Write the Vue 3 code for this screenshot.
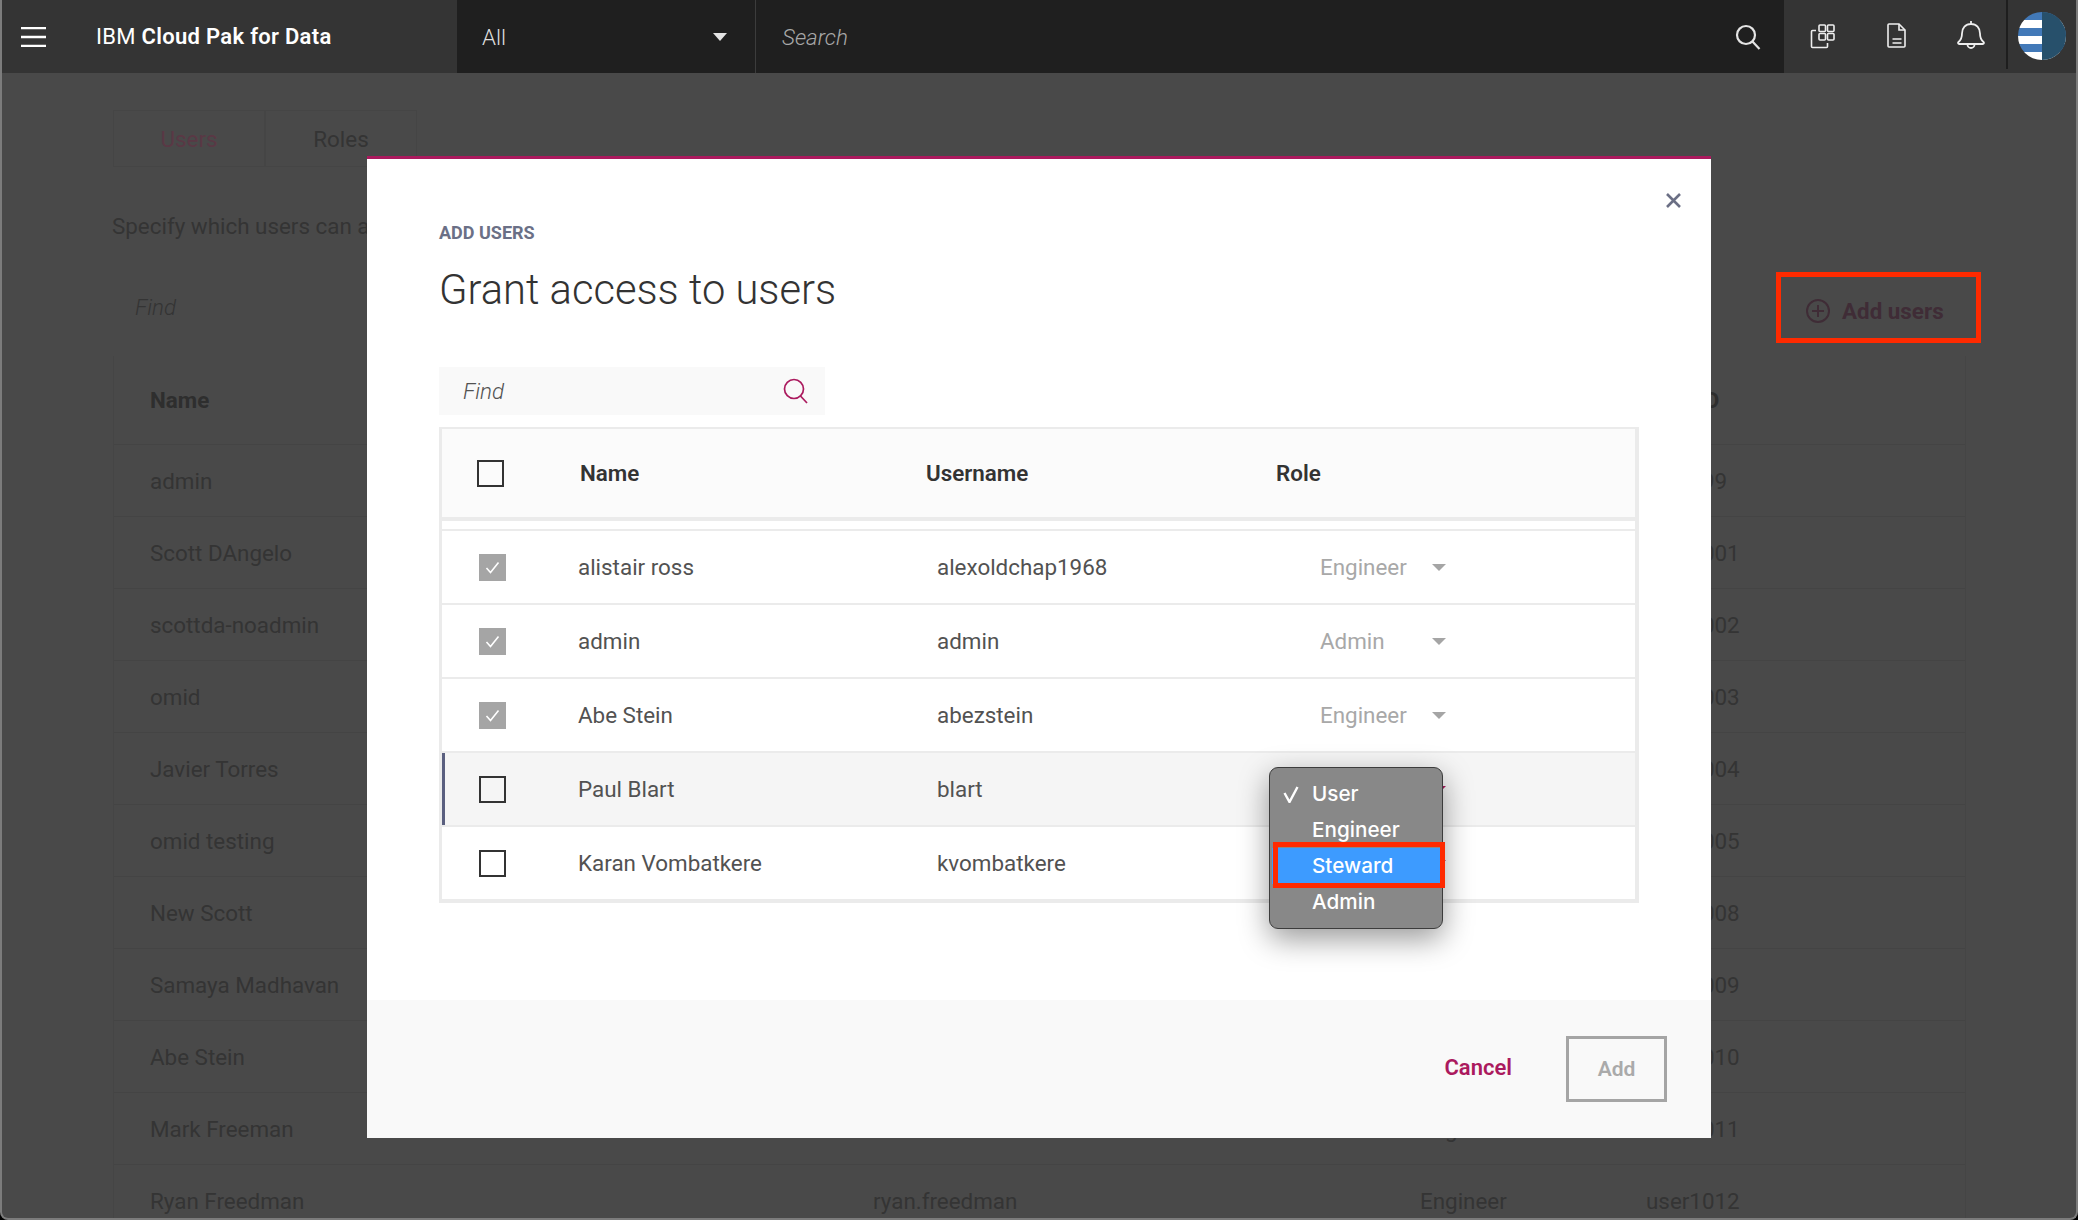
<template>
  <div class="screen">
    <header class="topbar">
      <div class="brand">
        <svg class="burger" width="26" height="20" viewBox="0 0 26 20"><path d="M0 1h25M0 10h25M0 19h25" stroke="#fff" stroke-width="2.4" fill="none" /></svg>
        <span class="product">IBM <b>Cloud Pak for Data</b></span>
      </div>
      <div class="scope">
        <span>All</span>
        <i class="caret"></i>
      </div>
      <div class="search">
        <span>Search</span>
        <svg width="26" height="26" viewBox="0 0 26 26" fill="none" stroke="#e4e4e4" stroke-width="2.2"><circle cx="11" cy="11" r="9" /><path d="M17.5 17.5l7 7.5" /></svg>
      </div>
      <div class="tools">
        <svg class="tool" width="26" height="26" viewBox="0 0 26 26" fill="none" stroke="#eee" stroke-width="1.6"><rect x="9" y="2" width="6.5" height="6.5" rx="1" /><rect x="17.500" y="2" width="6.5" height="6.5" rx="1" /><rect x="9" y="10.500" width="6.5" height="6.5" rx="1" /><rect x="17.500" y="10.500" width="6.5" height="6.5" rx="1" /><path d="M6 7.500H2.500a1 1 0 0 0-1 1v15a1 1 0 0 0 1 1h14a1 1 0 0 0 1-1V20" /></svg>
        <svg class="tool" width="20" height="26" viewBox="0 0 20 26" fill="none" stroke="#eee" stroke-width="1.6"><path d="M2 1h10l6 6v16a1 1 0 0 1-1 1H2a1 1 0 0 1-1-1V2a1 1 0 0 1 1-1z" /><path d="M12 1v6h6M5.500 16h9M5.500 20h9" /></svg>
        <svg class="tool" width="28" height="30" viewBox="0 0 28 30" fill="none" stroke="#eee" stroke-width="1.8"><path d="M14 1v3M14 4C8.500 4 5 8 5 13.500c0 4.500-1 6.500-3.500 8.500-.8.7-.5 2 .8 2h23.400c1.300 0 1.600-1.300.8-2-2.500-2-3.500-4-3.500-8.500C23 8 19.500 4 14 4z" /><path d="M10.500 24.500a3.500 3.500 0 0 0 7 0" /></svg>
        <div class="avatar"><span class="avatar-half"></span></div>
      </div>
    </header>

    <main class="page">
      <div class="tabs">
        <div class="tab tab-active">Users</div>
        <div class="tab">Roles</div>
      </div>
      <p class="intro">Specify which users can access this instance.</p>
      <div class="page-tools">
        <div class="page-find">Find</div>
        <div class="add-users">
          <svg width="24" height="24" viewBox="0 0 24 24" fill="none" stroke="#3f2c36" stroke-width="2"><circle cx="12" cy="12" r="11" /><path d="M12 6v12M6 12h12" /></svg>
          <span>Add users</span>
        </div>
      </div>
      <div class="page-table">
        <div class="page-row page-head">
          <span>Name</span><span>Username</span><span>Role</span><span>User ID</span>
        </div>
        <div v-for="u in pageUsers" :key="u.id" class="page-row">
          <span>{{ u.name }}</span><span>{{ u.username }}</span><span>{{ u.role }}</span><span>{{ u.id }}</span>
        </div>
      </div>
    </main>

    <section class="modal">
      <svg class="close" width="15" height="15" viewBox="0 0 15 15" stroke="#6b6f85" stroke-width="2.6"><path d="M1 1l13 13M14 1L1 14" /></svg>
      <div class="modal-body">
        <div class="eyebrow">ADD USERS</div>
        <h2 class="title">Grant access to users</h2>
        <div class="find">
          <span>Find</span>
          <svg width="26" height="26" viewBox="0 0 26 26" fill="none" stroke="#ab1a5e" stroke-width="1.7"><circle cx="11" cy="11" r="9.500" /><path d="M17.500 18l6.500 7" /></svg>
        </div>
        <div class="grid">
          <div class="grid-head">
            <span class="box box-head"></span>
            <span class="h-name">Name</span>
            <span class="h-user">Username</span>
            <span class="h-role">Role</span>
          </div>
          <div class="grid-rows">
            <div v-for="r in rows" :key="r.username" class="grid-row" :class="{ hover: r.hover }">
              <span class="box" :class="{ checked: r.checked }">
                <svg v-if="r.checked" width="15" height="13" viewBox="0 0 15 13" fill="none" stroke="#fff" stroke-width="1.6"><path d="M1.500 7l4 4.500 8-10" /></svg>
              </span>
              <span class="c-name">{{ r.name }}</span>
              <span class="c-user">{{ r.username }}</span>
              <span class="c-role" :class="{ live: !r.checked }">
                <span class="role-text">{{ r.role }}</span>
                <i class="role-caret"></i>
              </span>
            </div>
          </div>
        </div>
      </div>
      <footer class="modal-foot">
        <span class="cancel">Cancel</span>
        <span class="add">Add</span>
      </footer>
    </section>

    <div class="menu">
      <div v-for="m in menuItems" :key="m" class="menu-item" :class="{ picked: m === 'Steward' }">
        <svg v-if="m === 'User'" class="tick" width="16" height="17" viewBox="0 0 16 17" fill="none" stroke="#fff" stroke-width="2.4"><path d="M1.500 7l5 9L14.500 1" /></svg>
        {{ m }}
      </div>
      <div class="red-mark"></div>
    </div>
  </div>
</template>

<script setup>
const pageUsers = [
  { name: 'admin', username: 'admin', role: 'Admin', id: 'user999' },
  { name: 'Scott DAngelo', username: 'scottda', role: 'Admin', id: 'user1001' },
  { name: 'scottda-noadmin', username: 'scottda-noadmin', role: 'User', id: 'user1002' },
  { name: 'omid', username: 'omid', role: 'Admin', id: 'user1003' },
  { name: 'Javier Torres', username: 'jtorres', role: 'Engineer', id: 'user1004' },
  { name: 'omid testing', username: 'omidtest', role: 'User', id: 'user1005' },
  { name: 'New Scott', username: 'newscott', role: 'User', id: 'user1008' },
  { name: 'Samaya Madhavan', username: 'samaya', role: 'Admin', id: 'user1009' },
  { name: 'Abe Stein', username: 'abe', role: 'Admin', id: 'user1010' },
  { name: 'Mark Freeman', username: 'mfreeman', role: 'Engineer', id: 'user1011' },
  { name: 'Ryan Freedman', username: 'ryan.freedman', role: 'Engineer', id: 'user1012' }
];

// the last two rows have their role covered by the open menu
const rows = [
  { name: 'alistair ross', username: 'alexoldchap1968', role: 'Engineer', checked: true },
  { name: 'admin', username: 'admin', role: 'Admin', checked: true },
  { name: 'Abe Stein', username: 'abezstein', role: 'Engineer', checked: true },
  { name: 'Paul Blart', username: 'blart', role: '', hover: true },
  { name: 'Karan Vombatkere', username: 'kvombatkere', role: '' }
];

const menuItems = ['User', 'Engineer', 'Steward', 'Admin'];
</script>

<style>
html, body { background: #000; }
</style>

<style scoped>
.screen {
  position: relative;
  width: 2078px;
  height: 1220px;
  box-sizing: border-box;
  border: 2px solid #7c7c7c;
  border-top: 0;
  border-radius: 0 0 8px 8px;
  overflow: hidden;
  background: #494949;
  font-family: Roboto, "Liberation Sans", sans-serif;
  font-size: 22.4px;
}

.topbar {
  display: flex;
  height: 73px;
  color: #fff;
}
.brand {
  width: 455px;
  display: flex;
  align-items: center;
  padding-left: 19px;
  box-sizing: border-box;
  background: #343434;
}
.product { margin-left: 49px; font-size: 22px; letter-spacing: 0.3px; }
.product b { font-weight: 600; }
.scope {
  width: 299px;
  box-sizing: border-box;
  background: #1f1f1f;
  border-right: 1px solid #3c3c3c;
  display: flex;
  align-items: center;
  justify-content: space-between;
  padding: 0 28px 0 25px;
  color: #ddd;
  font-size: 22.4px;
  font-weight: 300;
}
.caret {
  border-left: 7px solid transparent;
  border-right: 7px solid transparent;
  border-top: 8px solid #e4e4e4;
}
.search {
  flex: 1;
  background: #1f1f1f;
  display: flex;
  align-items: center;
  justify-content: space-between;
  padding: 0 23px 0 26px;
  color: #a8a8a8;
  font-style: italic;
  font-size: 22.4px;
  font-weight: 300;
}
.tools {
  width: 292px;
  box-sizing: border-box;
  background: #343434;
  display: flex;
  align-items: center;
  position: relative;
}
.tool { position: absolute; }
.tool:nth-child(1) { left: 26px; top: 23px; }
.tool:nth-child(2) { left: 103px; top: 23px; }
.tool:nth-child(3) { left: 173px; top: 20px; }
.avatar {
  position: absolute;
  left: 234px;
  top: 12px;
  width: 48px;
  height: 48px;
  border-radius: 50%;
  overflow: hidden;
  background: repeating-linear-gradient(#4279b8 0 8px, #fff 8px 16px);
}
.avatar-half {
  position: absolute;
  right: 0;
  top: 0;
  width: 24px;
  height: 48px;
  background: #27506b;
}
.tools::before {
  content: '';
  position: absolute;
  left: 222px;
  top: 0;
  width: 2px;
  height: 69px;
  background: #1e1e1e;
}

.page { padding: 37px 110px 0 111px; color: #343434; }
.tabs { display: flex; height: 57px; }
.tab {
  width: 152px;
  box-sizing: border-box;
  border: 1px solid #454545;
  display: flex;
  align-items: center;
  justify-content: center;
}
.tab-active { color: #5a3845; }
.intro {
  margin: 46px 0 0 -1px;
  width: 255px;
  line-height: 26px;
  white-space: nowrap;
  overflow: hidden;
}
.page-tools {
  margin-top: 40px;
  height: 56px;
  display: flex;
  justify-content: space-between;
  align-items: center;
}
.page-find {
  width: 360px;
  height: 50px;
  line-height: 50px;
  padding-left: 22px;
  box-sizing: border-box;
  font-style: italic;
  font-weight: 300;
}
.add-users {
  margin-right: -15px;
  width: 205px;
  height: 71px;
  box-sizing: border-box;
  border: 5px solid #ff2a00;
  display: flex;
  align-items: center;
  gap: 12px;
  padding: 8px 0 0 25px;
  color: #3f2c36;
  font-weight: 700;
}
.page-table { margin-top: 21px; border-left: 1px solid #454545; border-right: 1px solid #454545; }
.page-row {
  height: 72px;
  box-sizing: border-box;
  display: grid;
  grid-template-columns: 723px 547px 226px 1fr;
  align-items: center;
  padding-left: 36px;
  border-bottom: 1px solid #444;
}
.page-head { height: 89px; font-weight: 700; color: #2e2e2e; }

.modal {
  position: absolute;
  left: 365px;
  top: 156px;
  width: 1344px;
  height: 982px;
  display: flex;
  flex-direction: column;
  background: #fff;
  border-top: 3px solid #ab1a5e;
  box-sizing: border-box;
  color: #525252;
}
.close { position: absolute; left: 1299px; top: 34px; }
.modal-body { flex: 1; padding: 64px 72px 0; }
.eyebrow { font-size: 18px; font-weight: 700; line-height: 20px; color: #6b7086; }
.title {
  margin: 23px 0 0;
  font-size: 41.7px;
  line-height: 48px;
  font-weight: 300;
  color: #333;
}
.find {
  margin-top: 53px;
  width: 386px;
  height: 48px;
  background: #f9f9f9;
  display: flex;
  align-items: center;
  justify-content: space-between;
  padding: 0 16px 0 24px;
  box-sizing: border-box;
  font-style: italic;
  font-weight: 300;
}
.grid {
  margin-top: 12px;
  width: 1200px;
  box-sizing: border-box;
  border: 3px solid #ebebeb;
  border-width: 2px 4px 2px 3px;
}
.grid-head {
  height: 88px;
  background: #fbfbfb;
  display: grid;
  grid-template-columns: 138px 346px 350px 1fr;
  align-items: center;
  border-bottom: 4px solid #ebebeb;
  font-weight: 600;
  color: #333;
  position: relative;
}
.box {
  width: 27px;
  height: 27px;
  box-sizing: border-box;
  border: 2px solid #333;
  display: flex;
  align-items: center;
  justify-content: center;
}
.box-head { margin-left: 35px; }
.grid-rows { padding-top: 8px; border-bottom: 2px solid #ebebeb; }
.grid-row {
  height: 74px;
  box-sizing: border-box;
  display: grid;
  grid-template-columns: 136px 359px 383px 1fr;
  align-items: center;
  border-top: 2px solid #ebebeb;
  background: #fff;
  padding-left: 0;
}
.grid-row .box { margin-left: 37px; }
.grid-row.hover { background: #f5f5f5; box-shadow: inset 3px 0 0 #5a5f7f; }
.checked { background: #a5a5a5; border-color: #a5a5a5; }
.c-role { display: flex; align-items: center; gap: 0; color: #a8a8a8; }
.role-text { width: 112px; }
.role-caret {
  border-left: 7px solid transparent;
  border-right: 7px solid transparent;
  border-top: 7px solid #a5a5a5;
}
.live { color: #525252; }
.live .role-caret { border-top-color: #ab1a5e; }

.modal-foot {
  height: 138px;
  background: #f9f9f9;
  display: flex;
  align-items: center;
  justify-content: flex-end;
  padding-right: 44px;
  gap: 54px;
}
.cancel { color: #ab1a5e; font-weight: 600; font-size: 22px; margin-bottom: 4px; }
.add {
  width: 101px;
  height: 66px;
  box-sizing: border-box;
  border: 3px solid #a5a5a5;
  display: flex;
  align-items: center;
  justify-content: center;
  color: #aaa;
  font-weight: 600;
  font-size: 21px;
}

.menu {
  position: absolute;
  left: 1267px;
  top: 767px;
  width: 174px;
  height: 162px;
  box-sizing: border-box;
  padding-top: 8px;
  background: #888;
  border: 1px solid #3c3c3c;
  border-radius: 9px;
  box-shadow: 0 10px 30px rgba(0, 0, 0, 0.4);
  font-family: Inter, Roboto, sans-serif;
  font-size: 20.7px;
  font-weight: 500;
  color: #fff;
}
.menu-item {
  position: relative;
  height: 36px;
  line-height: 36px;
  padding-left: 42px;
}
.menu-item.picked { background: #3d9bff; margin: 0 1px 0 2px; padding-left: 40px; }
.tick { position: absolute; left: 13px; top: 10px; }
.red-mark {
  position: absolute;
  left: 3px;
  top: 74px;
  width: 172px;
  height: 46px;
  box-sizing: border-box;
  border: 5px solid #ff2a00;
}
</style>
